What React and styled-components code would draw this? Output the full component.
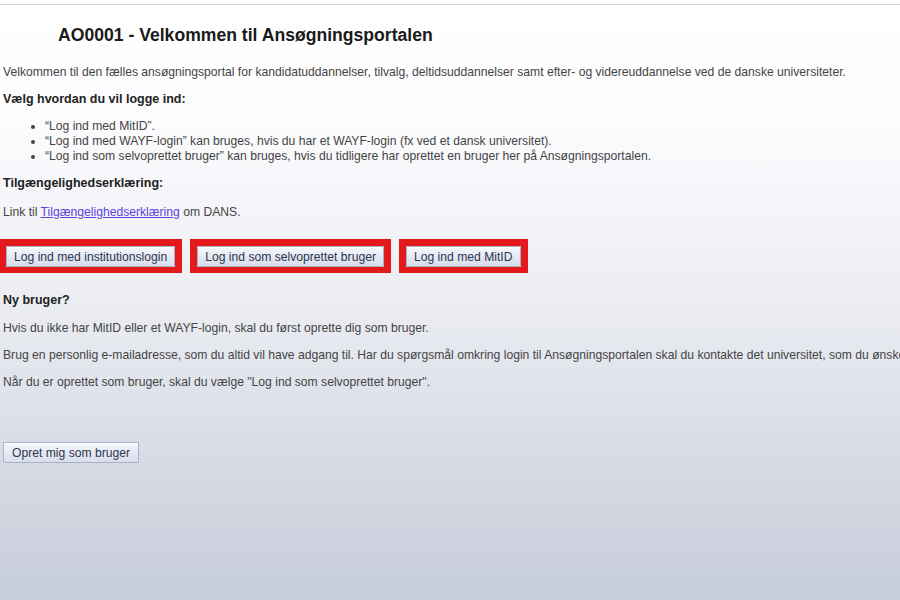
import React from "react";
import styled, { createGlobalStyle } from "styled-components";

const Global = createGlobalStyle`
  html, body { margin: 0; padding: 0; }
  body {
    font-family: "Liberation Sans", Arial, sans-serif;
    background: #c6ccd9;
  }
`;

const Page = styled.div`
  min-height: 600px;
  box-sizing: border-box;
  padding: 4px 0 40px 3px;
  background: linear-gradient(
    #ffffff 0px,
    #fcfcfe 120px,
    #f3f4f8 220px,
    #e9ebf1 320px,
    #d8dce6 450px,
    #c6ccd9 600px
  );
  color: #444;
  font-size: 12.15px;
  line-height: 15px;
  overflow: hidden;
`;

const TopRule = styled.div`
  height: 1px;
  margin-left: -3px;
  background: #d3d7e7;
`;

const Title = styled.h1`
  margin: 19px 0 0 55px;
  font-family: "Liberation Sans", Arial, sans-serif;
  font-size: 17.6px;
  line-height: 22px;
  font-weight: bold;
  color: #1a1a1a;
`;

const Text = styled.p`
  margin: ${(p) => p.$top}px 0 0 0;
  white-space: nowrap;
`;

const Heading = styled.h3`
  margin: ${(p) => p.$top}px 0 0 0;
  font-size: 12.5px;
  line-height: 15px;
  font-weight: bold;
  color: #222;
`;

const List = styled.ul`
  margin: 12px 0 0 0;
  padding-left: 42px;
  list-style: disc;
`;

const Link = styled.a`
  color: #6040df;
  text-decoration: underline;
`;

const ButtonRow = styled.div`
  display: flex;
  gap: 8px;
  margin: 19px 0 0 -4px;
`;

const Highlight = styled.div`
  border: 7px solid #e3191c;
  border-bottom-width: 6px;
`;

const Button = styled.button`
  display: block;
  height: 21px;
  padding: 0 ${(p) => p.$pad || 7}px;
  font-family: "Liberation Sans", Arial, sans-serif;
  font-size: 12.15px;
  color: #2c3650;
  background: linear-gradient(#f7f8fc, #e4e8f1 55%, #d9deea);
  border: 1px solid #a9b1c6;
  border-radius: 1px;
  box-shadow: inset 0 1px 0 #ffffff;
  cursor: pointer;
`;

const CreateWrap = styled.div`
  margin-top: 52px;
`;

export default function App() {
  return (
    <>
      <Global />
      <Page>
        <TopRule />
        <Title>AO0001 - Velkommen til Ansøgningsportalen</Title>
        <Text $top={19}>
          Velkommen til den fælles ansøgningsportal for kandidatuddannelser, tilvalg, deltidsuddannelser samt efter- og videreuddannelse ved de danske universiteter.
        </Text>
        <Heading $top={12}>Vælg hvordan du vil logge ind:</Heading>
        <List>
          <li>“Log ind med MitID”.</li>
          <li>“Log ind med WAYF-login” kan bruges, hvis du har et WAYF-login (fx ved et dansk universitet).</li>
          <li>“Log ind som selvoprettet bruger” kan bruges, hvis du tidligere har oprettet en bruger her på Ansøgningsportalen.</li>
        </List>
        <Heading $top={12}>Tilgængelighedserklæring:</Heading>
        <Text $top={14}>
          Link til <Link href="#">Tilgængelighedserklæring</Link> om DANS.
        </Text>
        <ButtonRow>
          <Highlight>
            <Button>Log ind med institutionslogin</Button>
          </Highlight>
          <Highlight>
            <Button>Log ind som selvoprettet bruger</Button>
          </Highlight>
          <Highlight>
            <Button>Log ind med MitID</Button>
          </Highlight>
        </ButtonRow>
        <Heading $top={20}>Ny bruger?</Heading>
        <Text $top={13}>Hvis du ikke har MitID eller et WAYF-login, skal du først oprette dig som bruger.</Text>
        <Text $top={12}>
          Brug en personlig e-mailadresse, som du altid vil have adgang til. Har du spørgsmål omkring login til Ansøgningsportalen skal du kontakte det universitet, som du ønsker at søge optagelse ved.
        </Text>
        <Text $top={12}>Når du er oprettet som bruger, skal du vælge "Log ind som selvoprettet bruger".</Text>
        <CreateWrap>
          <Button $pad={8}>Opret mig som bruger</Button>
        </CreateWrap>
      </Page>
    </>
  );
}
